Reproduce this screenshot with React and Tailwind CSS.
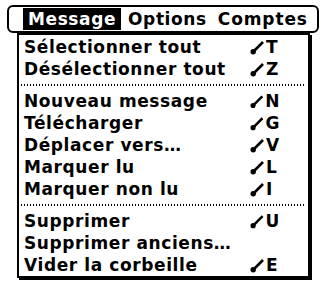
import React from "react";

const font = { fontFamily: '"DejaVu Sans", "Liberation Sans", sans-serif' };

function Stroke() {
  return (
    <svg width="14" height="14" viewBox="0 0 14 14" className="mr-[2px] mt-[1px]">
      <line x1="3" y1="11" x2="13" y2="1" stroke="black" strokeWidth="2.6" />
      <circle cx="3.2" cy="10.8" r="2.7" fill="black" />
    </svg>
  );
}

function Item({ label, k }) {
  return (
    <div className="flex items-center h-[22px] pl-[5px] pr-[28px]">
      <span className="flex-1 whitespace-nowrap">{label}</span>
      {k && (
        <span className="flex items-center w-[30px]">
          <Stroke />
          <span>{k}</span>
        </span>
      )}
    </div>
  );
}

function Sep() {
  return (
    <div className="h-[10px] flex items-center px-[2px]">
      <div className="w-full h-[2px] bg-[linear-gradient(to_right,black_50%,transparent_50%)] bg-[length:3px_2px]" />
    </div>
  );
}

export default function App() {
  return (
    <div className="w-[326px] h-[282px] bg-white relative overflow-hidden text-black font-bold text-[17px] leading-none tracking-[0.6px]" style={font}>
      <div className="absolute left-[7px] top-[5px] w-[312px] h-[28px] border-2 border-black rounded-[6px] flex items-center pl-[14px] bg-white">
        <span className="bg-black text-white h-[22px] flex items-center px-[5px]">Message</span>
        <span className="ml-[7px]">Options</span>
        <span className="ml-[11px] tracking-[0.9px]">Comptes</span>
      </div>
      <div className="absolute left-[17px] top-[33px] w-[293px] border-2 border-black bg-white shadow-[2px_2px_0_0_black] pt-[1px]">
        <Item label="Sélectionner tout" k="T" />
        <Item label="Désélectionner tout" k="Z" />
        <Sep />
        <Item label="Nouveau message" k="N" />
        <Item label="Télécharger" k="G" />
        <Item label="Déplacer vers…" k="V" />
        <Item label="Marquer lu" k="L" />
        <Item label="Marquer non lu" k="I" />
        <Sep />
        <Item label="Supprimer" k="U" />
        <Item label="Supprimer anciens…" />
        <Item label="Vider la corbeille" k="E" />
      </div>
    </div>
  );
}
